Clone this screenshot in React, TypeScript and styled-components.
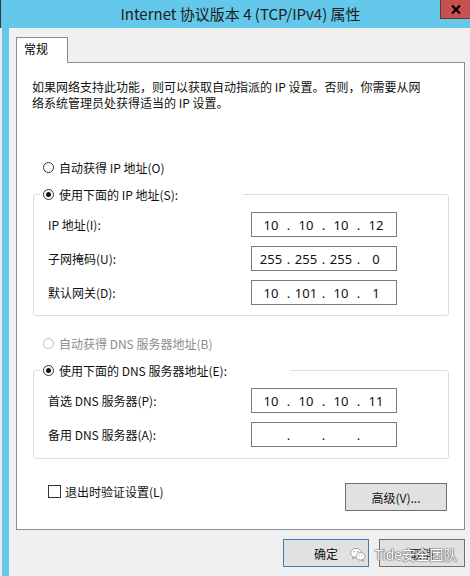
import React from "react";
import styled, { createGlobalStyle } from "styled-components";

const GlobalStyle = createGlobalStyle`
  html, body { margin: 0; padding: 0; }
  body {
    background: #f0f0f0;
    font-family: "Noto Sans CJK SC", "Noto Sans", sans-serif;
    color: #111;
  }
  * { box-sizing: border-box; }
`;

const Window = styled.div`
  width: 470px;
  height: 576px;
  display: flex;
  flex-direction: column;
  overflow: hidden;
`;

const TitleBar = styled.div`
  height: 28px;
  flex: none;
  background: #63c8e9;
  display: grid;
  grid-template-areas: "all";
  border-left: 1px solid #2d3a40;
`;

const Title = styled.div`
  grid-area: all;
  justify-self: center;
  align-self: center;
  padding-left: 10px;
  font-size: 15px;
  color: #1d1d1d;
  line-height: 20px;
  margin-top: -1px;
`;

const CloseButton = styled.div`
  grid-area: all;
  justify-self: end;
  align-self: start;
  width: 30px;
  height: 19px;
  background: #c75050;
  border: 1px solid #6b3434;
  border-top: none;
  border-right: none;
  display: flex;
  align-items: center;
  justify-content: center;
`;

const Body = styled.div`
  flex: 1;
  display: flex;
`;

const FrameEdge = styled.div`
  width: 9px;
  flex: none;
  background: #63c8e9;
  border-left: 2px solid #eaeaea;
`;

const Client = styled.div`
  flex: 1;
  background: #f0f0f0;
  padding: 9px 5px 0 7px;
  display: flex;
  flex-direction: column;
`;

const TabStrip = styled.div`
  display: flex;
  height: 25px;
  position: relative;
  z-index: 1;
`;

const Tab = styled.div`
  width: 52px;
  height: 26px;
  background: #fff;
  border: 1px solid #898c95;
  border-bottom: none;
  font-size: 12px;
  line-height: 22px;
  padding-left: 7px;
  color: #000;
`;

const Panel = styled.div`
  background: #fff;
  border: 1px solid #898c95;
  height: 468px;
  display: flex;
  flex-direction: column;
`;

const Description = styled.p`
  margin: 16px 0 0 15px;
  font-size: 12px;
  line-height: 16px;
  color: #111;
`;

const RadioRow = styled.label<{ $disabled?: boolean; $legend?: boolean }>`
  display: flex;
  align-items: center;
  height: 20px;
  gap: 5px;
  font-size: 12px;
  color: ${(p) => (p.$disabled ? "#8b8b8b" : "#111")};
`;

const Radio = styled.span<{ $checked?: boolean; $disabled?: boolean }>`
  width: 11px;
  height: 11px;
  border-radius: 50%;
  border: 1px solid ${(p) => (p.$disabled ? "#bcbcbc" : "#333")};
  background: #fff;
  display: flex;
  align-items: center;
  justify-content: center;
  flex: none;
  &::after {
    content: "";
    display: ${(p) => (p.$checked ? "block" : "none")};
    width: 5px;
    height: 5px;
    border-radius: 50%;
    background: #111;
  }
`;

const TopRadio = styled.div<{ $mt: number }>`
  margin: ${(p) => p.$mt}px 0 0 26px;
`;

const Group = styled.fieldset<{ $mt: number; $pt: number; $pb: number }>`
  margin: ${(p) => p.$mt}px 15px 0 16px;
  padding: ${(p) => p.$pt}px 0 ${(p) => p.$pb}px 0;
  border: 1px solid #d6dde4;
  border-radius: 3px;
  display: flex;
  flex-direction: column;
  gap: 9px;
`;

const Legend = styled.legend<{ $w: number }>`
  margin-left: 6px;
  padding: 0 0 0 3px;
  width: ${(p) => p.$w}px;
  background: #fff;
`;

const FieldRow = styled.div`
  display: flex;
  align-items: center;
  padding-left: 14px;
  height: 25px;
  margin-bottom: 9px;
  &:last-child { margin-bottom: 0; }
`;

const FieldLabel = styled.span`
  width: 203px;
  font-size: 12px;
  color: #111;
`;

const IpBox = styled.div`
  width: 146px;
  height: 25px;
  border: 1px solid #7a7a7a;
  display: flex;
  align-items: center;
  padding-left: 4px;
  font-family: "Noto Sans", "Liberation Sans", sans-serif;
  font-size: 13px;
  color: #111;
`;

const Octet = styled.span`
  width: 30px;
  text-align: center;
`;

const Dot = styled.span`
  width: 5px;
  text-align: center;
`;

const Footer = styled.div`
  margin-top: 24px;
  padding: 0 17px 0 31px;
  display: flex;
  justify-content: space-between;
  align-items: flex-start;
`;

const CheckRow = styled.label`
  display: flex;
  align-items: center;
  gap: 4px;
  margin-top: 2px;
  font-size: 12px;
  color: #111;
  height: 13px;
`;

const CheckBox = styled.span`
  width: 13px;
  height: 13px;
  border: 1px solid #333;
  background: #fff;
  flex: none;
`;

const Button = styled.div<{ $w: number; $default?: boolean }>`
  width: ${(p) => p.$w}px;
  height: 28px;
  background: #e1e1e1;
  border: 1px solid ${(p) => (p.$default ? "#3c7fb1" : "#707070")};
  display: flex;
  align-items: center;
  justify-content: center;
  font-size: 12px;
  color: #111;
`;

const ButtonBar = styled.div`
  margin-top: 9px;
  display: flex;
  justify-content: flex-end;
  gap: 10px;
  position: relative;
`;

const Watermark = styled.div`
  position: absolute;
  right: 8px;
  top: 5px;
  display: flex;
  align-items: center;
  gap: 9px;
  pointer-events: none;
`;

const WatermarkText = styled.span`
  font-family: "Noto Sans", "Noto Sans CJK SC", sans-serif;
  font-size: 14px;
  color: #fff;
  text-shadow: 0 0 1px #555, 0 0 1px #555, 0 0 2px #777;
  letter-spacing: -0.2px;
`;

const ip = (parts: string[]) => (
  <IpBox>
    {parts.map((p, i) => (
      <React.Fragment key={i}>
        <Octet>{p}</Octet>
        {i < 3 && <Dot>.</Dot>}
      </React.Fragment>
    ))}
  </IpBox>
);

const WeChatIcon = () => (
  <svg width="16" height="15" viewBox="0 0 16 15">
    <ellipse cx="6" cy="6" rx="5.3" ry="4.6" fill="#fff" stroke="#999" strokeWidth="0.9" />
    <path d="M3 9.8 L2.4 12 L5 10.6 Z" fill="#fff" stroke="#999" strokeWidth="0.8" />
    <ellipse cx="10.6" cy="9.4" rx="4.5" ry="3.8" fill="#fff" stroke="#999" strokeWidth="0.9" />
    <path d="M12.8 12.6 L13.6 14.4 L11.4 13 Z" fill="#fff" stroke="#999" strokeWidth="0.8" />
    <circle cx="4.2" cy="4.8" r="0.7" fill="#999" />
    <circle cx="7.6" cy="4.8" r="0.7" fill="#999" />
    <circle cx="9.2" cy="8.6" r="0.6" fill="#999" />
    <circle cx="12" cy="8.6" r="0.6" fill="#999" />
  </svg>
);

export default function App() {
  return (
    <>
      <GlobalStyle />
      <Window>
        <TitleBar>
          <Title>Internet 协议版本 4 (TCP/IPv4) 属性</Title>
          <CloseButton>
            <svg width="10" height="9" viewBox="0 0 10 9">
              <path d="M1 0.5 L9 8.5 M9 0.5 L1 8.5" stroke="#000" strokeWidth="2.2" />
            </svg>
          </CloseButton>
        </TitleBar>
        <Body>
          <FrameEdge />
          <Client>
            <TabStrip>
              <Tab>常规</Tab>
            </TabStrip>
            <Panel>
              <Description>
                如果网络支持此功能，则可以获取自动指派的 IP 设置。否则，你需要从网
                <br />
                络系统管理员处获得适当的 IP 设置。
              </Description>

              <TopRadio $mt={46}>
                <RadioRow>
                  <Radio />
                  自动获得 IP 地址(O)
                </RadioRow>
              </TopRadio>

              <Group $mt={7} $pt={8} $pb={10}>
                <Legend $w={203}>
                  <RadioRow>
                    <Radio $checked />
                    使用下面的 IP 地址(S):
                  </RadioRow>
                </Legend>
                <div>
                  <FieldRow>
                    <FieldLabel>IP 地址(I):</FieldLabel>
                    {ip(["10", "10", "10", "12"])}
                  </FieldRow>
                  <FieldRow>
                    <FieldLabel>子网掩码(U):</FieldLabel>
                    {ip(["255", "255", "255", "0"])}
                  </FieldRow>
                  <FieldRow>
                    <FieldLabel>默认网关(D):</FieldLabel>
                    {ip(["10", "101", "10", "1"])}
                  </FieldRow>
                </div>
              </Group>

              <TopRadio $mt={17}>
                <RadioRow $disabled>
                  <Radio $disabled />
                  自动获得 DNS 服务器地址(B)
                </RadioRow>
              </TopRadio>

              <Group $mt={7} $pt={8} $pb={11}>
                <Legend $w={250}>
                  <RadioRow>
                    <Radio $checked />
                    使用下面的 DNS 服务器地址(E):
                  </RadioRow>
                </Legend>
                <div>
                  <FieldRow>
                    <FieldLabel>首选 DNS 服务器(P):</FieldLabel>
                    {ip(["10", "10", "10", "11"])}
                  </FieldRow>
                  <FieldRow>
                    <FieldLabel>备用 DNS 服务器(A):</FieldLabel>
                    {ip(["", "", "", ""])}
                  </FieldRow>
                </div>
              </Group>

              <Footer>
                <CheckRow>
                  <CheckBox />
                  退出时验证设置(L)
                </CheckRow>
                <Button $w={102}>高级(V)...</Button>
              </Footer>
            </Panel>
            <ButtonBar>
              <Button $w={86} $default>
                确定
              </Button>
              <Button $w={86}>取消</Button>
              <Watermark>
                <WeChatIcon />
                <WatermarkText>Tide安全团队</WatermarkText>
              </Watermark>
            </ButtonBar>
          </Client>
        </Body>
      </Window>
    </>
  );
}
